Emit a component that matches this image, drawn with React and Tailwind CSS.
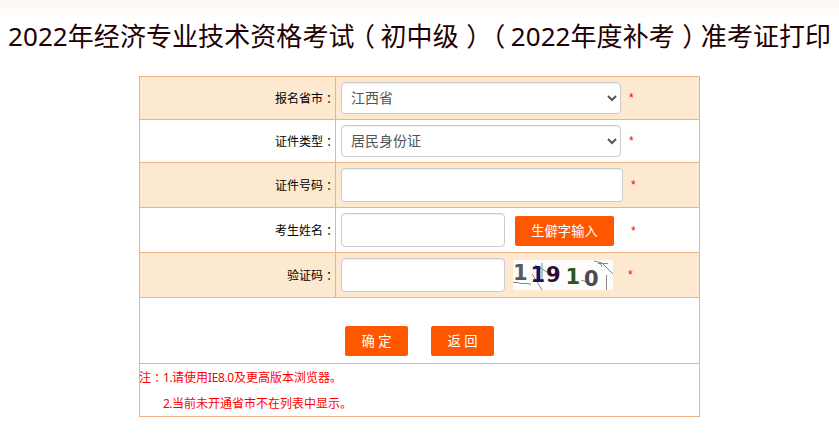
import clsx from "clsx";

const fieldClass =
  "block shrink-0 rounded border border-[#ccc] bg-white text-sm text-[#555] outline-none shadow-[inset_0_1px_1px_rgba(0,0,0,0.075)]";

function Row({ label, striped, className, children }) {
  return (
    <div
      className={clsx(
        "flex border-b border-[#f0b183]",
        striped && "bg-[#fde9d0]",
        className
      )}
    >
      <div className="flex w-[196px] shrink-0 items-center justify-end border-r border-[#f0b183] pt-0.5 text-xs text-black">
        {label}
        <Colon />
      </div>
      <div className="flex flex-1 items-center pl-[5px]">{children}</div>
    </div>
  );
}

function Colon() {
  return (
    <span className="font-['Noto_Sans_CJK_TC',sans-serif]" lang="zh-TW">
      ：
    </span>
  );
}

// full-width bracket with its glyph near the middle of the em box
function Paren({ children }) {
  return (
    <span className="inline-block w-[26px] pl-0.5 text-center [font-feature-settings:'halt']">
      {children}
    </span>
  );
}

function Required({ className }) {
  return (
    <span
      className={clsx(
        "font-['Liberation_Sans',sans-serif] text-xs leading-4 text-[#f00]",
        className
      )}
    >
      *
    </span>
  );
}

function Select({ options }) {
  return (
    <select className={clsx(fieldClass, "h-8 w-[280px] px-[5px] pb-0.5")}>
      {options.map((option) => (
        <option key={option}>{option}</option>
      ))}
    </select>
  );
}

function Button({ className, children }) {
  return (
    <button
      type="button"
      className={clsx(
        "h-[30px] shrink-0 rounded-xs bg-[#ff5700] text-[13.3px] leading-[30px] whitespace-nowrap text-white",
        className
      )}
    >
      {children}
    </button>
  );
}

function Captcha() {
  return (
    <svg
      className="ml-2 shrink-0 bg-[#fdfdfb]"
      width="100"
      height="30"
      viewBox="0 0 100 30"
    >
      <g fill="none" stroke="#888" strokeWidth="1">
        <path d="M0 22.5h5l2 1h8l3 1" />
        <path d="M19 14l5 8 5 8" />
        <path d="M22 5l12 7M29 3v17" />
        <path d="M81 1l8 2 11 11M85 3.5h10M87 2l2 5M93.5 15v15M68 20l6 2" />
      </g>
      <g
        fontFamily="'DejaVu Sans', sans-serif"
        fontWeight="bold"
        fontSize="21"
      >
        <text x="0" y="20" fill="#5a5a5a">1</text>
        <text x="17.5" y="22" fill="#14145c">1</text>
        <text x="33" y="21.5" fill="#300a30">9</text>
        <text x="52.5" y="24" fill="#2d561c">1</text>
        <text x="71" y="26" fill="#504850">0</text>
      </g>
    </svg>
  );
}

export default function App() {
  return (
    <div className="h-[437px] w-[839px] overflow-hidden bg-white bg-linear-to-b from-[#fff7f3] to-white to-[20px] font-['Noto_Sans','Noto_Sans_CJK_SC',sans-serif]">
      <h1 className="mt-4 h-[60px] pl-2 text-[26px] leading-[41px] tracking-[0.07px] whitespace-nowrap text-[#200]">
        2022年经济专业技术资格考试<Paren>（</Paren>初中级<Paren>）</Paren>
        <Paren>（</Paren>2022年度补考<Paren>）</Paren>准考证打印
      </h1>

      <div className="ml-[139px] w-[561px] border border-b-0 border-[#f0b183]">
        <Row label="报名省市" striped className="h-[43px]">
          <Select options={["江西省"]} />
          <Required className="ml-2" />
        </Row>
        <Row label="证件类型" className="h-[43px]">
          <Select options={["居民身份证"]} />
          <Required className="ml-2" />
        </Row>
        <Row label="证件号码" striped className="h-[45px]">
          <input className={clsx(fieldClass, "h-[34px] w-[282px] px-3")} />
          <Required className="ml-2" />
        </Row>
        <Row label="考生姓名" className="h-[45px]">
          <input className={clsx(fieldClass, "h-[34px] w-[164px] px-3")} />
          <Button className="mt-0.5 ml-2.5 w-[99px]">生僻字输入</Button>
          <Required className="ml-[17px] pt-0.5" />
        </Row>
        <Row label="验证码" striped className="h-[45px]">
          <input className={clsx(fieldClass, "h-[34px] w-[164px] px-3")} />
          <Captcha />
          <Required className="ml-[15px]" />
        </Row>

        <div className="flex h-[66px] gap-[23px] border-b border-[#f0b183] pt-7 pl-[205px]">
          <Button className="w-[63px]">确 定</Button>
          <Button className="w-[63px]">返 回</Button>
        </div>

        <div className="h-[53px] border-b border-[#f0b183] pt-px text-xs leading-[26px] text-[#f00]">
          <p className="-ml-px flex">
            注<Colon />
            <span className="w-[9px] tracking-[-0.5px]">1.</span>请使用
            <span className="w-[26px] tracking-[-0.4px]">IE8.0</span>
            及更高版本浏览器。
          </p>
          <p className="flex pl-[23px]">
            <span className="w-[9px] tracking-[-0.5px]">2.</span>
            当前未开通省市不在列表中显示。
          </p>
        </div>
      </div>
    </div>
  );
}
